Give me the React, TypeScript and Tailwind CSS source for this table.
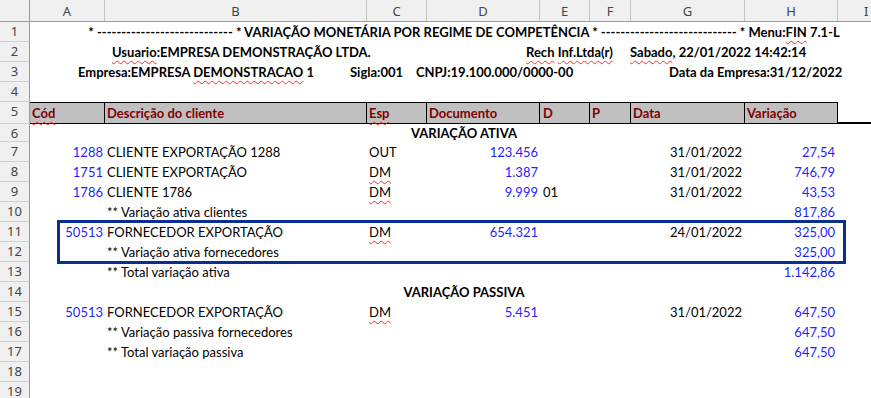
const cols =
  "grid grid-cols-[75px_262px_60px_113px_50px_41px_114px_93px_1fr]";

type Linha = {
  n: number;
  cod?: string;
  desc?: string;
  esp?: string;
  doc?: string;
  d?: string;
  data?: string;
  valor?: string;
};

const ativa: Linha[] = [
  { n: 7, cod: "1288", desc: "CLIENTE EXPORTAÇÃO 1288", esp: "OUT", doc: "123.456", data: "31/01/2022", valor: "27,54" },
  { n: 8, cod: "1751", desc: "CLIENTE EXPORTAÇÃO", esp: "DM", doc: "1.387", data: "31/01/2022", valor: "746,79" },
  { n: 9, cod: "1786", desc: "CLIENTE 1786", esp: "DM", doc: "9.999", d: "01", data: "31/01/2022", valor: "43,53" },
  { n: 10, desc: "** Variação ativa clientes", valor: "817,86" },
  { n: 11, cod: "50513", desc: "FORNECEDOR EXPORTAÇÃO", esp: "DM", doc: "654.321", data: "24/01/2022", valor: "325,00" },
  { n: 12, desc: "** Variação ativa fornecedores", valor: "325,00" },
  { n: 13, desc: "** Total variação ativa", valor: "1.142,86" },
];

const passiva: Linha[] = [
  { n: 15, cod: "50513", desc: "FORNECEDOR EXPORTAÇÃO", esp: "DM", doc: "5.451", data: "31/01/2022", valor: "647,50" },
  { n: 16, desc: "** Variação passiva fornecedores", valor: "647,50" },
  { n: 17, desc: "** Total variação passiva", valor: "647,50" },
];

const colunas = [
  { l: "A", w: "w-[75px]" },
  { l: "B", w: "w-[262px]" },
  { l: "C", w: "w-[60px]" },
  { l: "D", w: "w-[113px]" },
  { l: "E", w: "w-[50px]" },
  { l: "F", w: "w-[41px]" },
  { l: "G", w: "w-[114px]" },
  { l: "H", w: "w-[93px]" },
];

function Spell({ children }: { children: React.ReactNode }) {
  return (
    <span className="underline decoration-wavy decoration-[#ff3030] decoration-1 underline-offset-[3px]">
      {children}
    </span>
  );
}

function Row({
  n,
  h = "h-5",
  className = "",
  children,
}: {
  n: number;
  h?: string;
  className?: string;
  children?: React.ReactNode;
}) {
  return (
    <div className={`flex ${h}`}>
      <div className="w-[30px] shrink-0 border-r border-b border-r-[#9a9a9a] border-b-[#d0d0d0] bg-[#f0f0f0] text-center font-['Noto_Sans',sans-serif] text-[13px] leading-[19px] text-[#444]">
        {n}
      </div>
      <div className={`min-w-0 flex-1 leading-5 ${className}`}>{children}</div>
    </div>
  );
}

function DataRow({ r }: { r: Linha }) {
  return (
    <Row n={r.n} className={cols}>
      <div className="pr-[2px] text-right text-[#1f1fff]">{r.cod}</div>
      <div className="whitespace-nowrap pl-[2px]">{r.desc}</div>
      <div className="pl-[2px]">{r.esp === "DM" ? <Spell>DM</Spell> : r.esp}</div>
      <div className="pr-[2px] text-right text-[#1f1fff]">{r.doc}</div>
      <div className="pl-[3px]">{r.d}</div>
      <div />
      <div className="pr-[3px] text-right">{r.data}</div>
      <div className="pr-[3px] text-right text-[#1f1fff]">{r.valor}</div>
      <div />
    </Row>
  );
}

export default function App() {
  return (
    <div className="relative h-[398px] w-[871px] overflow-hidden bg-white font-['Lato',sans-serif] text-[13px] text-black">
      {/* column letters */}
      <div className="flex h-[22px] border-b border-[#9a9a9a] bg-[#f0f0f0] font-['Noto_Sans',sans-serif] text-[13px] text-[#444]">
        <div className="w-[30px] shrink-0 border-r border-[#9a9a9a]" />
        {colunas.map((c) => (
          <div
            key={c.l}
            className={`${c.w} shrink-0 border-r border-[#c4c4c4] text-center leading-[22px]`}
          >
            {c.l}
          </div>
        ))}
        <div className="flex-1 pl-[26px] leading-[22px]">I</div>
      </div>

      <Row n={1} className="whitespace-nowrap pl-[27px] text-center font-bold">
        * ---------------------------- * VARIAÇÃO MONETÁRIA POR REGIME DE COMPETÊNCIA *
        ---------------------------- * Menu:<Spell>FIN</Spell> 7.1-L
      </Row>
      <Row n={2} className="flex whitespace-nowrap font-bold">
        <div className="w-[496px] shrink-0 pl-[82px]">
          <Spell>Usuario</Spell>:EMPRESA DEMONSTRAÇÃO LTDA.
        </div>
        <div className="w-[104px] shrink-0">
          <Spell>Rech</Spell> <Spell>Inf.Ltda(r)</Spell>
        </div>
        <div>
          <Spell>Sabado</Spell>, 22/01/2022 14:42:14
        </div>
      </Row>
      <Row n={3} className="flex whitespace-nowrap font-bold">
        <div className="w-[320px] shrink-0 pl-[48px]">
          Empresa:EMPRESA <Spell>DEMONSTRACAO</Spell> 1
        </div>
        <div className="w-[66px] shrink-0">Sigla:001</div>
        <div className="w-[253px] shrink-0">CNPJ:19.100.000/0000-00</div>
        <div>Data da Empresa:31/12/2022</div>
      </Row>
      <Row n={4} />

      {/* report column titles */}
      <Row n={5} h="h-[22px]" className="border-b-2 border-black">
        <div className={`${cols} h-5 font-bold text-[#800000]`}>
          <div className="border-t border-r border-black bg-[#c0c0c0] pl-[2px]">
            <Spell>Cód</Spell>
          </div>
          <div className="border-t border-r border-black bg-[#c0c0c0] pl-[2px]">
            Descrição do cliente
          </div>
          <div className="border-t border-r border-black bg-[#c0c0c0] pl-[2px]">
            <Spell>Esp</Spell>
          </div>
          <div className="border-t border-r border-black bg-[#c0c0c0] pl-[2px]">Documento</div>
          <div className="border-t border-r border-black bg-[#c0c0c0] pl-[3px]">D</div>
          <div className="border-t border-r border-black bg-[#c0c0c0] pl-[2px]">P</div>
          <div className="border-t border-r border-black bg-[#c0c0c0] pl-[2px]">Data</div>
          <div className="border-t border-r border-black bg-[#c0c0c0] pl-[2px]">Variação</div>
          <div />
        </div>
      </Row>

      <Row n={6} h="h-[18px]" className="pl-[27px] text-center font-bold leading-[18px]">
        VARIAÇÃO ATIVA
      </Row>
      {ativa.map((r) => (
        <DataRow key={r.n} r={r} />
      ))}
      <Row n={14} className="pl-[27px] text-center font-bold">
        VARIAÇÃO PASSIVA
      </Row>
      {passiva.map((r) => (
        <DataRow key={r.n} r={r} />
      ))}
      <Row n={18} />
      <Row n={19} />

      {/* highlight around the supplier block */}
      <div className="pointer-events-none absolute left-[57px] top-[220px] h-[44px] w-[789px] border-[3px] border-[#0a2f8f]" />
    </div>
  );
}
